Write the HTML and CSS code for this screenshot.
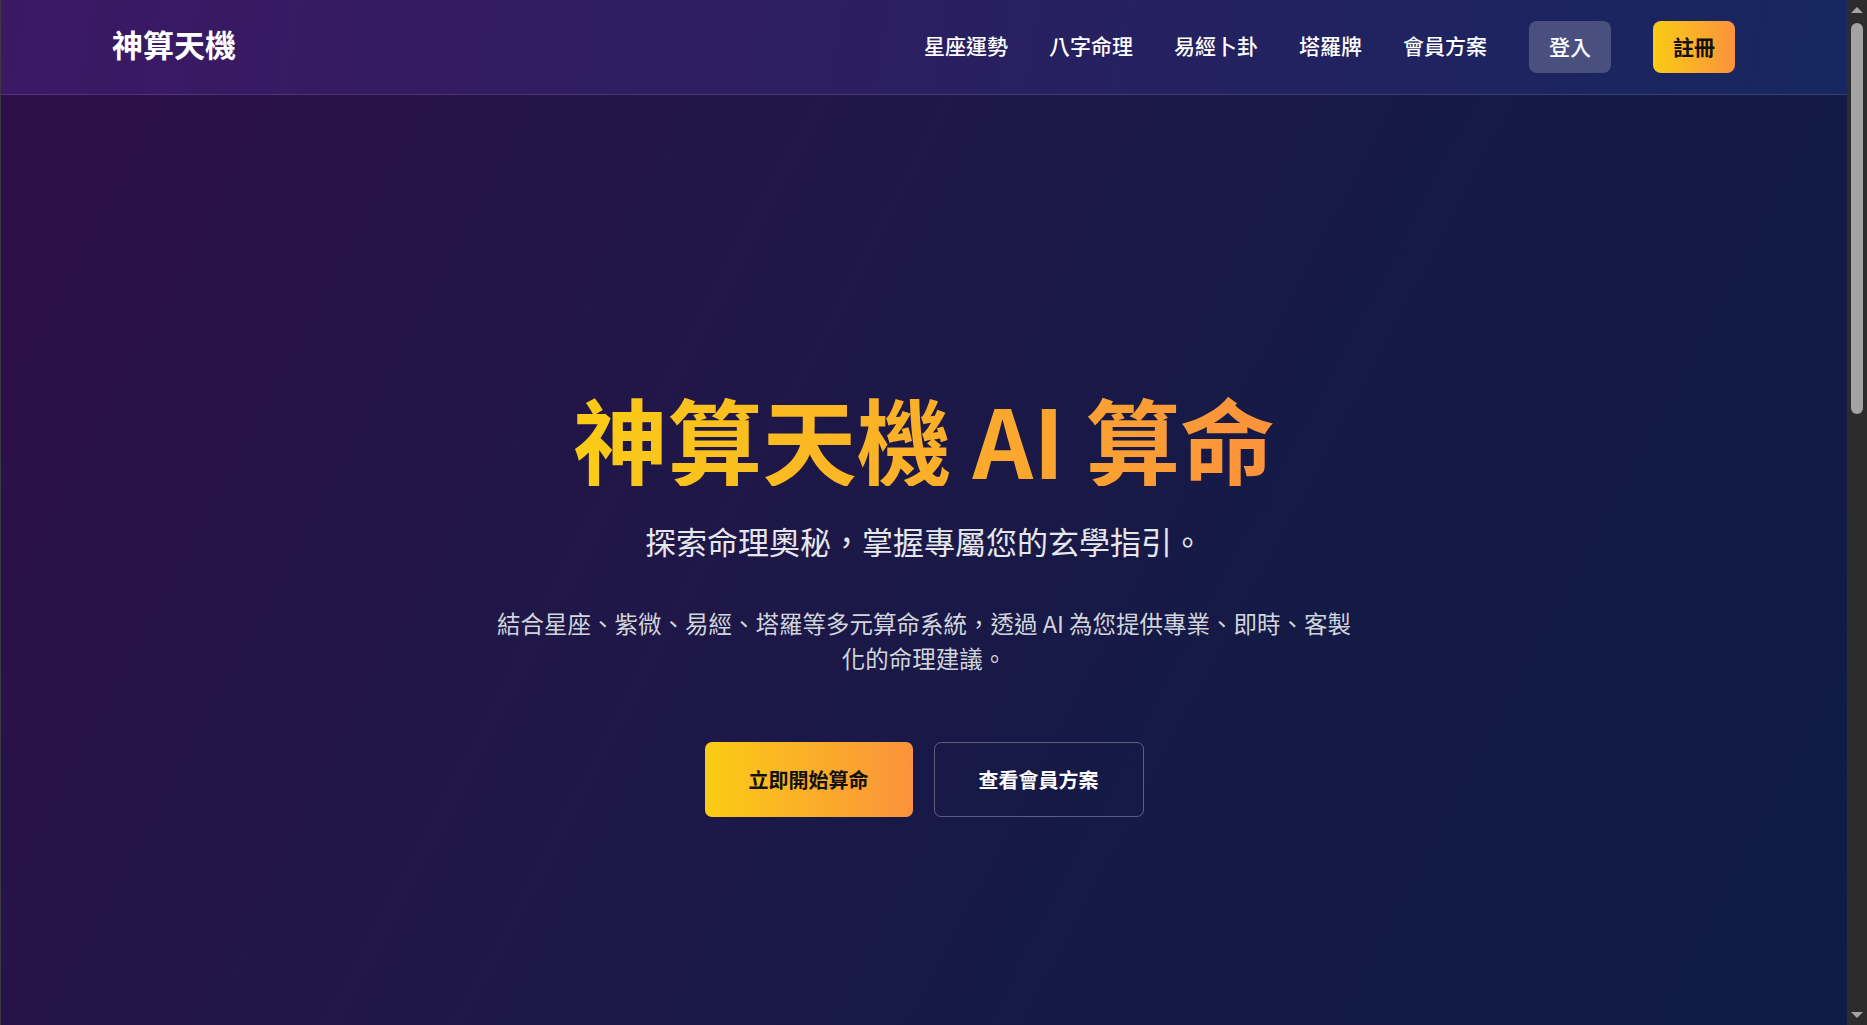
FILE: index.html
```html
<!DOCTYPE html>
<html lang="zh-Hant">
<head>
<meta charset="utf-8">
<title>神算天機 AI 算命</title>
<link rel="stylesheet" href="styles.css">
</head>
<body>
<div class="page">
  <header class="site-header">
    <a class="logo" href="#">神算天機</a>
    <nav class="nav">
      <a class="nav-link" href="#">星座運勢</a>
      <a class="nav-link" href="#">八字命理</a>
      <a class="nav-link" href="#">易經卜卦</a>
      <a class="nav-link" href="#">塔羅牌</a>
      <a class="nav-link" href="#">會員方案</a>
      <a class="btn-login" href="#">登入</a>
      <a class="btn-register" href="#">註冊</a>
    </nav>
  </header>

  <main>
    <section class="hero">
      <div class="hero-inner">
        <h1 class="hero-title">神算天機 AI 算命</h1>
        <p class="hero-subtitle">探索命理奧秘，掌握專屬您的玄學指引。</p>
        <p class="hero-desc">結合星座、紫微、易經、塔羅等多元算命系統，透過 AI 為您提供專業、即時、客製化的命理建議。</p>
        <div class="hero-actions">
          <a class="btn-primary" href="#">立即開始算命</a>
          <a class="btn-outline" href="#">查看會員方案</a>
        </div>
      </div>
    </section>
  </main>
</div>

<div class="scrollbar" aria-hidden="true">
  <div class="sb-arrow sb-up"></div>
  <div class="sb-track">
    <div class="sb-thumb"></div>
  </div>
  <div class="sb-arrow sb-down"></div>
</div>
</body>
</html>
```

FILE: styles.css
```css
* {
  box-sizing: border-box;
}

html,
body {
  height: 100%;
}

body {
  margin: 0;
  display: flex;
  overflow: hidden;
  font-family: "Noto Sans CJK TC", "Noto Sans", sans-serif;
  color: #ffffff;
  background: #111a44;
}

a {
  text-decoration: none;
  color: inherit;
}

/* ---------- page column ---------- */
.page {
  flex: 1;
  min-width: 0;
  height: 100vh;
  overflow: hidden;
  border-left: 1px solid #3a3a3e;
}

/* ---------- header ---------- */
.site-header {
  height: 95px;
  display: flex;
  align-items: center;
  justify-content: space-between;
  padding: 0 112px 0 111px;
  background: linear-gradient(100deg, #3c1864 0%, #2a1f60 50%, #16275f 100%);
  border-bottom: 1px solid rgba(255, 255, 255, 0.12);
}

.logo {
  font-size: 31px;
  font-weight: 700;
  color: #ffffff;
  line-height: 31px;
  padding-bottom: 8px;
}

.nav {
  display: flex;
  align-items: center;
}

.nav-link {
  font-size: 21px;
  font-weight: 500;
  color: #ffffff;
  margin-left: 41px;
  line-height: 28px;
  padding-bottom: 4px;
}

.nav-link:first-child {
  margin-left: 0;
}

.btn-login,
.btn-register {
  height: 52px;
  display: inline-flex;
  align-items: center;
  padding: 0 20px 2px;
  border-radius: 8px;
  font-size: 21px;
  margin-left: 42px;
}

.btn-login {
  background: rgba(255, 255, 255, 0.2);
  color: #ffffff;
  font-weight: 500;
}

.btn-register {
  background: linear-gradient(90deg, #facc15, #fb923c);
  color: #111111;
  font-weight: 700;
}

/* ---------- hero ---------- */
.hero {
  min-height: 100vh;
  display: flex;
  align-items: center;
  justify-content: center;
  padding-bottom: 7px;
  background: linear-gradient(118deg, #2d0f47 0%, #1f1748 38%, #141a46 65%, #0f1c44 100%);
}

.hero-inner {
  display: flex;
  flex-direction: column;
  align-items: center;
  text-align: center;
}

.hero-title {
  margin: 0 0 36px;
  font-size: 94.5px;
  line-height: 1;
  font-weight: 700;
  background: linear-gradient(90deg, #facc15, #fb923c);
  -webkit-background-clip: text;
  background-clip: text;
  color: transparent;
}

.hero-subtitle {
  margin: 0 0 47px;
  font-size: 31px;
  line-height: 37px;
  color: #e5e7eb;
  font-weight: 400;
}

.hero-desc {
  margin: 0 0 66px;
  max-width: 868px;
  font-size: 23.5px;
  line-height: 35px;
  color: #d1d5db;
}

.hero-actions {
  display: flex;
  gap: 21px;
}

.btn-primary,
.btn-outline {
  height: 75px;
  display: inline-flex;
  align-items: center;
  justify-content: center;
  padding: 0 44px;
  border-radius: 7px;
  font-size: 20px;
  font-weight: 700;
}

.btn-primary {
  background: linear-gradient(90deg, #facc15, #fb923c);
  color: #111111;
}

.btn-outline {
  border: 1px solid rgba(255, 255, 255, 0.3);
  color: #ffffff;
  font-weight: 600;
}

/* ---------- window scrollbar (dark theme) ---------- */
.scrollbar {
  flex: none;
  width: 20px;
  height: 100vh;
  background: #2c2c2c;
  display: flex;
  flex-direction: column;
  align-items: center;
}

.sb-arrow {
  flex: none;
  height: 20px;
  width: 20px;
  display: flex;
  align-items: center;
  justify-content: center;
}

.sb-arrow::before {
  content: "";
  width: 0;
  height: 0;
  border-left: 6px solid transparent;
  border-right: 6px solid transparent;
}

.sb-up::before {
  border-bottom: 6px solid #a3a3a3;
}

.sb-down::before {
  border-top: 6px solid #a3a3a3;
}

.sb-track {
  flex: 1;
  width: 100%;
  display: flex;
  justify-content: center;
  padding-top: 3px;
}

.sb-thumb {
  width: 12px;
  height: 391px;
  border-radius: 6px;
  background: #a3a3a3;
}
```
